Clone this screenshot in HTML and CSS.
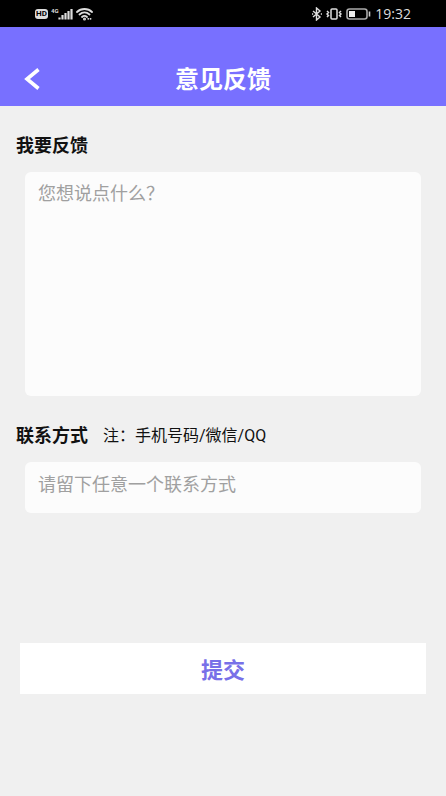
FILE: index.html
```html
<!DOCTYPE html>
<html lang="zh-CN">
<head>
    <meta charset="UTF-8">
    <meta name="viewport" content="width=device-width, initial-scale=1.0">
    <title>意见反馈</title>
    <link rel="stylesheet" href="styles.css">
</head>
<body>
    <div class="status-bar">
        <div class="status-left">
            <span class="hd-badge">HD</span>
            <svg class="signal-icon" width="22" height="14" viewBox="0 0 22 14">
                <text class="net-type" x="0" y="6">4G</text>
                <path d="M8.5 12.5v-2M11.5 12.5V8M14.5 12.5V6M17.5 12.5V4M20.5 12.5V2" stroke="#ddd" stroke-width="2.2"/>
            </svg>
            <svg width="17" height="14" viewBox="0 0 17 14" fill="none" stroke="#ddd" stroke-width="1.8" stroke-linecap="round">
                <path d="M1 5C5 1 12 1 16 5M3.5 7.5C6.5 4.8 10.5 4.8 13.5 7.5M6 10C7.5 8.6 9.5 8.6 11 10"/>
                <circle cx="8.5" cy="12" r="0.6"/>
                <path d="M12.2 11.8h.1M14.5 11.8h.1"/>
            </svg>
        </div>
        <div class="status-right">
            <svg width="10" height="14" viewBox="0 0 10 14" fill="none" stroke="#ddd" stroke-width="1.4">
                <path d="M1 4l7 6-3.5 3V1L8 4l-7 6"/>
                <path d="M0 7h1.2M8.8 7H10"/>
            </svg>
            <svg width="16" height="14" viewBox="0 0 16 14" fill="none" stroke="#ddd" stroke-width="1.5">
                <rect x="5" y="2" width="6" height="10" rx="1"/>
                <path d="M1 4l1.5 1.5L1 7l1.5 1.5L1 10M15 4l-1.5 1.5L15 7l-1.5 1.5L15 10"/>
            </svg>
            <svg width="25" height="14" viewBox="0 0 25 14">
                <rect x="1" y="2" width="20" height="10" rx="2.5" fill="none" stroke="#aaa" stroke-width="1.6"/>
                <rect x="3" y="4" width="6" height="6" fill="#eee"/>
                <path d="M23.5 4.5v5" stroke="#ccc" stroke-width="1.6"/>
            </svg>
            <span class="time">19:32</span>
        </div>
    </div>

    <header class="header">
        <button type="button" class="back-btn" aria-label="返回">
            <svg width="16" height="22" viewBox="0 0 16 22" fill="none" stroke="#fff" stroke-width="3.6">
                <path d="M14.5 1.5L3 11l11.5 9.5"/>
            </svg>
        </button>
        <h1>意见反馈</h1>
    </header>

    <form class="feedback-form">
        <div class="label-row">
            <label for="feedback">我要反馈</label>
        </div>
        <textarea id="feedback" class="field feedback-box" placeholder="您想说点什么？"></textarea>
        <div class="label-row contact-row">
            <label for="contact">联系方式</label>
            <span class="note">注：手机号码/微信/QQ</span>
        </div>
        <input type="text" id="contact" class="field contact-box" placeholder="请留下任意一个联系方式">
        <button type="button" class="submit-btn">提交</button>
    </form>
</body>
</html>
```
FILE: styles.css
```css
* {
    box-sizing: border-box;
}
body {
    margin: 0;
    min-height: 100vh;
    background: #f0f0f0;
    color: #111;
    font-family: Roboto, "Noto Sans CJK SC", sans-serif;
}
.status-bar {
    display: flex;
    justify-content: space-between;
    height: 27px;
    padding: 0 35px;
    background: #000;
    color: #ddd;
}
.status-left,
.status-right {
    display: flex;
    align-items: center;
}
.status-left {
    gap: 3px;
}
.status-right {
    gap: 4px;
}
.hd-badge {
    width: 13px;
    border-radius: 3px;
    background: #ddd;
    color: #000;
    font-size: 8px;
    font-weight: bold;
    line-height: 10px;
    text-align: center;
}
.net-type {
    fill: #ddd;
    font-size: 6px;
    font-weight: bold;
}
.time {
    font-family: "Open Sans", sans-serif;
    font-size: 14px;
}
.header {
    display: grid;
    grid-template-columns: 64px 1fr 64px;
    align-items: center;
    height: 79px;
    padding-top: 24px;
    background: #7870ff;
}
.header h1 {
    margin: 0;
    padding-top: 2px;
    color: #fff;
    font-size: 24px;
    font-weight: bold;
    line-height: 32px;
    text-align: center;
}
.back-btn {
    display: flex;
    padding: 8px 24px;
    border: none;
    background: none;
    cursor: pointer;
}
.feedback-form {
    display: flex;
    flex-direction: column;
    padding: 28px 25px;
}
.label-row {
    display: flex;
    align-items: center;
    gap: 15px;
    margin: 0 -9px 14px;
    line-height: 24px;
}
.label-row label {
    font-size: 18px;
    font-weight: bold;
}
.contact-row {
    margin-top: 28px;
}
.note {
    font-size: 16px;
}
.field {
    width: 100%;
    padding: 9px 13px;
    border: none;
    border-radius: 6px;
    outline: none;
    background: #fcfcfc;
    color: #333;
    font-family: inherit;
    font-size: 18px;
    line-height: 26px;
}
.field::placeholder {
    color: #a0a0a0;
    opacity: 1;
}
.feedback-box {
    display: block;
    height: 224px;
    resize: none;
}
.contact-box {
    height: 51px;
    padding-bottom: 16px;
}
.submit-btn {
    height: 51px;
    margin: 130px -5px 0;
    padding: 0 0 2px;
    border: none;
    background: #fff;
    color: #7870e8;
    font-family: inherit;
    font-size: 22px;
    font-weight: bold;
    cursor: pointer;
}
```
